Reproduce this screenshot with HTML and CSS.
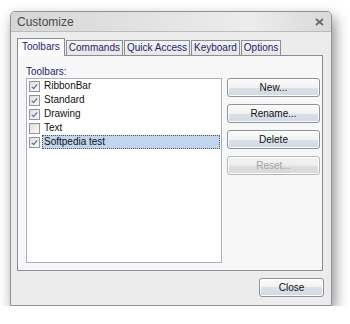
FILE: index.html
```html
<!DOCTYPE html>
<html lang="en">
<head>
  <meta charset="UTF-8" />
  <title>Customize</title>
  <link rel="stylesheet" href="styles.css">
</head>
<body>
  <div class="window">
    <div class="titlebar">
      <span class="title">Customize</span>
      <svg class="close-x" viewBox="0 0 9 8" width="9" height="8">
        <path d="M1 1l7 6M8 1l-7 6" stroke="#6b6b6b" stroke-width="1.8" fill="none"/>
      </svg>
    </div>

    <div class="client">
      <div class="tabs">
        <div class="tab active">Toolbars</div>
        <div class="tab">Commands</div>
        <div class="tab">Quick Access</div>
        <div class="tab">Keyboard</div>
        <div class="tab">Options</div>
      </div>

      <div class="panel">
        <div class="label">Toolbars:</div>
        <div class="list">
          <div class="row"><span class="check on"></span><span class="name">RibbonBar</span></div>
          <div class="row"><span class="check on"></span><span class="name">Standard</span></div>
          <div class="row"><span class="check on"></span><span class="name">Drawing</span></div>
          <div class="row"><span class="check"></span><span class="name">Text</span></div>
          <div class="row"><span class="check on"></span><span class="name selected">Softpedia test</span></div>
        </div>
        <div class="buttons">
          <button class="btn">New...</button>
          <button class="btn">Rename...</button>
          <button class="btn">Delete</button>
          <button class="btn" disabled>Reset...</button>
        </div>
      </div>

      <div class="footer">
        <button class="btn close-btn">Close</button>
      </div>
    </div>
  </div>
</body>
</html>
```

FILE: styles.css
```css
html, body {
  margin: 0;
  padding: 0;
  background: white;
  font-family: 'Liberation Sans', Arial, sans-serif;
  font-size: 10px;
}
body {
  padding: 11px 0 0 10px;
}
.window {
  width: 322px;
  height: 295px;
  box-sizing: border-box;
  border: 1px solid #8d939c;
  border-radius: 5px 5px 0 0;
  box-shadow: 3px 6px 14px rgba(0, 0, 0, 0.45);
  display: flex;
  flex-direction: column;
  background: #ececec;
}
.titlebar {
  height: 20px;
  display: flex;
  align-items: center;
  justify-content: space-between;
  padding: 0 7px 0 6px;
  background: linear-gradient(to right, #d6d6d6, #e6e6e6 55%, #ececec 75%, #d9d9d9);
  border-bottom: 1px solid #b9bcc2;
  border-radius: 4px 4px 0 0;
}
.title {
  font-family: 'Liberation Sans', Arial, sans-serif;
  font-size: 12px;
  color: #4a4a4a;
}
.close-x {
  display: block;
}
.client {
  flex: 1;
  display: flex;
  flex-direction: column;
  padding: 6px 7px 8px 6px;
}
.tabs {
  display: flex;
  align-items: flex-end;
  gap: 1px;
  height: 17px;
  position: relative;
  z-index: 2;
}
.tab {
  line-height: 14px;
  padding: 0 2px;
  border: 1px solid #8b8e96;
  border-bottom: none;
  background: linear-gradient(#f4f4f4, #e6e6e6);
  color: #1e1e6e;
  box-sizing: border-box;
  height: 15px;
}
.tab.active {
  height: 18px;
  line-height: 15px;
  padding: 0 4px;
  background: #fbfbfb;
  margin-bottom: -1px;
}
.panel {
  width: 306px;
  height: 216px;
  box-sizing: border-box;
  border: 1px solid #8b8e96;
  background: #f7f7f7;
  display: grid;
  grid-template-columns: 196px 93px;
  grid-template-rows: 13px 185px;
  column-gap: 5px;
  padding: 9px 0 0 8px;
}
.label {
  color: #1e1e6e;
  line-height: 13px;
}
.list {
  grid-column: 1;
  grid-row: 2;
  background: white;
  border: 1px solid #a6b0c0;
  box-sizing: border-box;
  padding: 0 1px 0 2px;
}
.row {
  height: 14px;
  display: flex;
  align-items: center;
}
.check {
  width: 11px;
  height: 11px;
  box-sizing: border-box;
  border: 1px solid #959595;
  background: linear-gradient(135deg, #dedede, #fafafa);
  margin-right: 2px;
  position: relative;
}
.check.on::after {
  content: "";
  position: absolute;
  left: 3px;
  top: 1px;
  width: 2px;
  height: 5px;
  border: solid #4b6590;
  border-width: 0 1.5px 1.5px 0;
  transform: rotate(40deg);
}
.name {
  height: 14px;
  line-height: 14px;
  padding: 0 2px;
  box-sizing: border-box;
  color: #111;
}
.name.selected {
  flex: 1;
  background: #c2d5ef;
  outline: 1px dotted #555;
  outline-offset: -1px;
}
.buttons {
  grid-column: 2;
  grid-row: 2;
  display: flex;
  flex-direction: column;
  gap: 7px;
}
.btn {
  width: 93px;
  height: 19px;
  padding: 0;
  font-family: 'Liberation Sans', Arial, sans-serif;
  font-size: 10px;
  color: #111;
  border: 1px solid #8e949c;
  border-radius: 3px;
  background: linear-gradient(#fbfbfb, #f1f1f1 50%, #dbe1ea 50%, #d2d9e3);
  box-shadow: inset 0 0 0 1px #fdfdfd;
}
.btn:disabled {
  color: #a3a3a3;
  border-color: #b5b8bb;
  background: linear-gradient(#f4f4f4, #ececec 50%, #dedede 50%, #d8d8d8);
}
.footer {
  display: flex;
  justify-content: flex-end;
  margin-top: 7px;
}
.close-btn {
  width: 65px;
}
```
